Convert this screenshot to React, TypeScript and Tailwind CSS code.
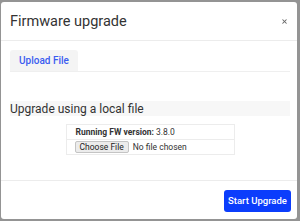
import { X } from "lucide-react";

export default function App() {
  return (
    <div
      className="w-[300px] h-[221px] bg-[#949494] pt-[2px] pl-[1px] pr-[3px] pb-[2px] flex"
      style={{ fontFamily: "Roboto, 'Liberation Sans', sans-serif" }}
    >
      <div className="flex-1 bg-white rounded-[3px] flex flex-col overflow-hidden">
        {/* Header */}
        <div className="h-[39px] border-b border-[#ececec] flex items-center justify-between pl-[9px] pr-[9px] shrink-0">
          <h2 className="text-[14.5px] text-[#333] leading-none pt-[2px]">Firmware upgrade</h2>
          <X className="w-[7px] h-[7px] text-[#666]" strokeWidth={3.5} />
        </div>

        {/* Body */}
        <div className="flex-1 pl-[9px] pr-[7px] pt-[9px] flex flex-col">
          <div className="flex border-b border-[#efefef]">
            <div className="w-[68px] h-[21px] bg-[#f4f4f4] rounded-t-[3px] flex items-center justify-center text-[10px] text-[#3b5cf0] font-medium">
              Upload File
            </div>
          </div>

          <div className="mt-[29px] h-[15px] bg-[#f7f7f7] flex items-center">
            <span className="text-[12px] leading-none text-[#333]">Upgrade using a local file</span>
          </div>

          <div className="mt-[8px] self-center w-[169px] border border-[#ececec] text-[8.5px] text-[#333]">
            <div className="h-[15px] border-b border-[#ececec] flex items-center pl-[9px]">
              <span className="font-bold">Running FW version:</span>
              <span className="ml-[2px]">3.8.0</span>
            </div>
            <div className="h-[14px] flex items-center pl-[8px]">
              <button className="h-[12px] px-[4px] bg-[#ececec] border border-[#c4c4c4] rounded-[2px] text-[8.5px] leading-none text-[#222]">
                Choose File
              </button>
              <span className="ml-[4px] text-[#333]">No file chosen</span>
            </div>
          </div>
        </div>

        {/* Footer */}
        <div className="border-t border-[#ececec] flex justify-end pt-[9px] pb-[7px] pr-[6px] shrink-0">
          <button className="h-[22px] w-[67px] bg-[#0b3dfc] rounded-[3px] text-white text-[9.5px] font-medium">
            Start Upgrade
          </button>
        </div>
      </div>
    </div>
  );
}
